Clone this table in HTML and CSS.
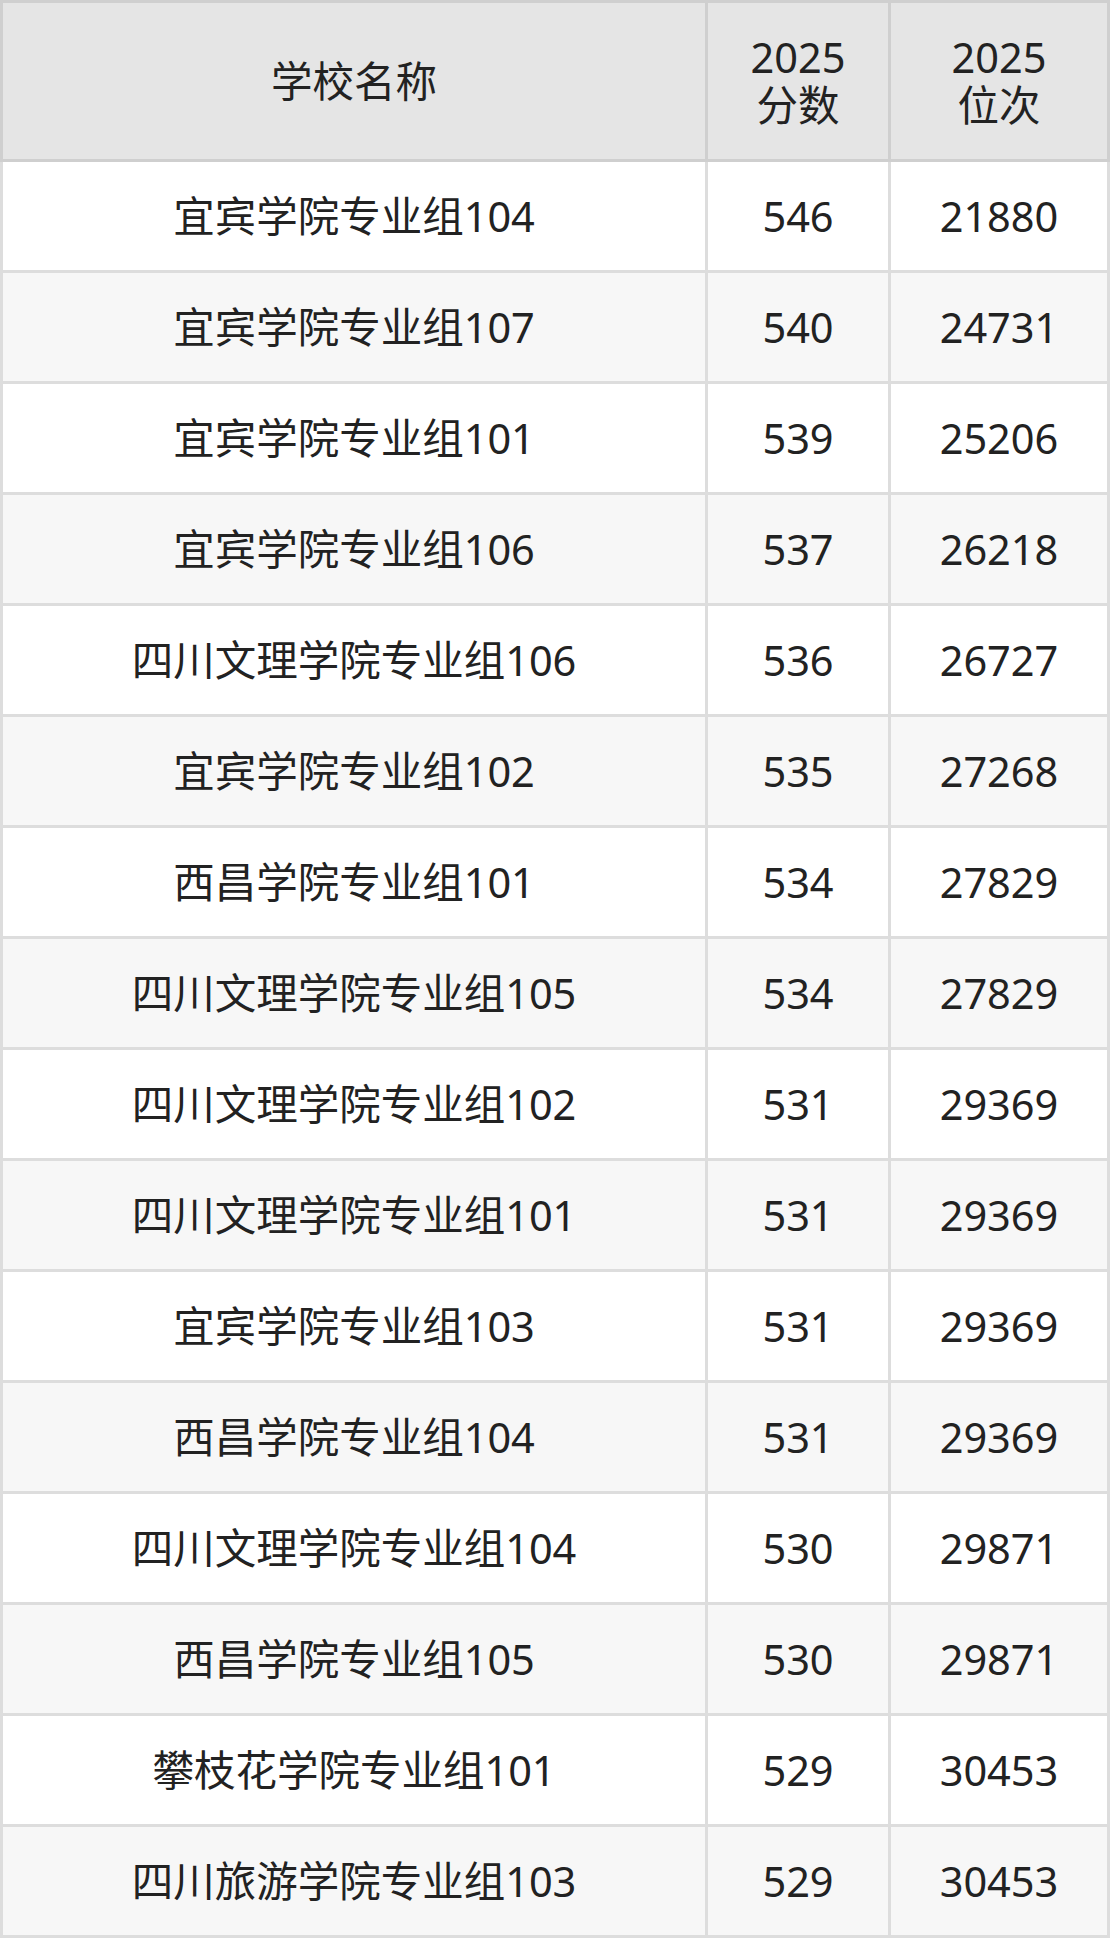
FILE: index.html
```html
<!DOCTYPE html>
<html lang="zh-CN">
<head>
<meta charset="utf-8">
<link rel="stylesheet" href="styles.css">
</head>
<body>
<div class="table">
  <div class="head">
    <div class="hcell">学校名称</div>
    <div class="hcell"><span class="line">2025</span><span class="line">分数</span></div>
    <div class="hcell"><span class="line">2025</span><span class="line">位次</span></div>
  </div>
  <div class="body">
    <div class="row"><div class="cell">宜宾学院专业组104</div><div class="cell">546</div><div class="cell">21880</div></div>
    <div class="row"><div class="cell">宜宾学院专业组107</div><div class="cell">540</div><div class="cell">24731</div></div>
    <div class="row"><div class="cell">宜宾学院专业组101</div><div class="cell">539</div><div class="cell">25206</div></div>
    <div class="row"><div class="cell">宜宾学院专业组106</div><div class="cell">537</div><div class="cell">26218</div></div>
    <div class="row"><div class="cell">四川文理学院专业组106</div><div class="cell">536</div><div class="cell">26727</div></div>
    <div class="row"><div class="cell">宜宾学院专业组102</div><div class="cell">535</div><div class="cell">27268</div></div>
    <div class="row"><div class="cell">西昌学院专业组101</div><div class="cell">534</div><div class="cell">27829</div></div>
    <div class="row"><div class="cell">四川文理学院专业组105</div><div class="cell">534</div><div class="cell">27829</div></div>
    <div class="row"><div class="cell">四川文理学院专业组102</div><div class="cell">531</div><div class="cell">29369</div></div>
    <div class="row"><div class="cell">四川文理学院专业组101</div><div class="cell">531</div><div class="cell">29369</div></div>
    <div class="row"><div class="cell">宜宾学院专业组103</div><div class="cell">531</div><div class="cell">29369</div></div>
    <div class="row"><div class="cell">西昌学院专业组104</div><div class="cell">531</div><div class="cell">29369</div></div>
    <div class="row"><div class="cell">四川文理学院专业组104</div><div class="cell">530</div><div class="cell">29871</div></div>
    <div class="row"><div class="cell">西昌学院专业组105</div><div class="cell">530</div><div class="cell">29871</div></div>
    <div class="row"><div class="cell">攀枝花学院专业组101</div><div class="cell">529</div><div class="cell">30453</div></div>
    <div class="row"><div class="cell">四川旅游学院专业组103</div><div class="cell">529</div><div class="cell">30453</div></div>
  </div>
</div>
</body>
</html>
```

FILE: styles.css
```css
html, body {
  margin: 0;
  padding: 0;
  background: #ffffff;
}

.table {
  width: 1110px;
  font-family: "Noto Sans", "Noto Sans CJK SC", sans-serif;
  font-size: 41.5px;
  color: #222222;
}

.head {
  display: grid;
  grid-template-columns: 702px 180px 216px;
  gap: 3px;
  padding: 3px;
  background: #cfcfcf;
}

.hcell {
  height: 156px;
  background: #e5e5e5;
  display: flex;
  flex-direction: column;
  align-items: center;
  justify-content: center;
  text-align: center;
  line-height: 48px;
}

.line {
  display: block;
  height: 48px;
}

.body {
  display: grid;
  grid-template-columns: 702px 180px 216px;
  grid-auto-rows: 108px;
  gap: 3px;
  padding: 0 3px 3px 3px;
  background: #dddddd;
}

.row {
  display: contents;
}

.cell {
  background: #ffffff;
  display: flex;
  align-items: center;
  justify-content: center;
  line-height: 48px;
}

.row:nth-child(even) .cell {
  background: #f7f7f7;
}
```
